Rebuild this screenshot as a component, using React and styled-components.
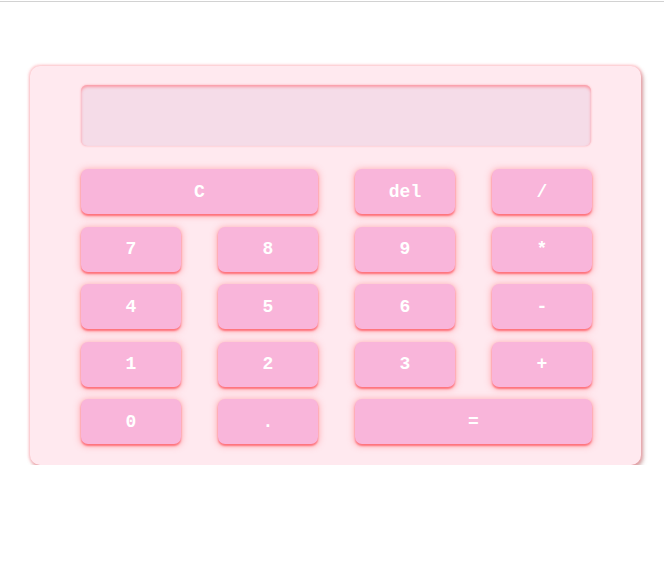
import styled, { createGlobalStyle } from "styled-components";

const GlobalStyle = createGlobalStyle`
    html {
        padding-top: 1px;
        background: #fff;
    }
    body {
        margin: 0;
        border-top: 1px solid #d2d2d2;
        font-family: "Liberation Mono", "Courier New", monospace;
    }
`;

const Page = styled.div`
    padding: 64px 0 0 30px;
`;

const Calculator = styled.div`
    width: 611px;
    box-sizing: border-box;
    padding: 19px 50px 21px 51px;
    background-color: #ffe9ef;
    border-radius: 10px;
    box-shadow: 0 0 3px 1px rgba(255, 150, 160, 0.6),
        2px 3px 4px rgba(160, 90, 90, 0.55);
`;

const Display = styled.div`
    height: 61px;
    border-radius: 6px;
    background-color: #f5dce8;
    box-shadow: inset 0 2px 3px rgba(255, 110, 120, 0.6),
        0 0 2px rgba(255, 120, 130, 0.6);
    margin-bottom: 23px;
`;

const Keys = styled.div`
    display: grid;
    grid-template-columns: repeat(4, 100px);
    grid-auto-rows: 45px;
    column-gap: 37px;
    row-gap: 12.5px;
`;

const Key = styled.button`
    grid-column: span ${(p) => p.$span || 1};
    border: none;
    border-radius: 7px;
    background-color: #f9b5da;
    color: #fff;
    font-family: "Liberation Mono", "Courier New", monospace;
    font-weight: bold;
    font-size: 18px;
    padding: 0;
    box-shadow: 0 2px 2px rgba(255, 80, 90, 0.7),
        0 1px 6px 1px rgba(255, 110, 120, 0.5);
    cursor: pointer;
`;

const keys = [
    ["C", 2], ["del"], ["/"],
    ["7"], ["8"], ["9"], ["*"],
    ["4"], ["5"], ["6"], ["-"],
    ["1"], ["2"], ["3"], ["+"],
    ["0"], ["."], ["=", 2],
];

export default function App() {
    return (
        <>
            <GlobalStyle />
            <Page>
                <Calculator>
                    <Display />
                    <Keys>
                        {keys.map(([label, span]) => (
                            <Key key={label} $span={span}>{label}</Key>
                        ))}
                    </Keys>
                </Calculator>
            </Page>
        </>
    );
}
